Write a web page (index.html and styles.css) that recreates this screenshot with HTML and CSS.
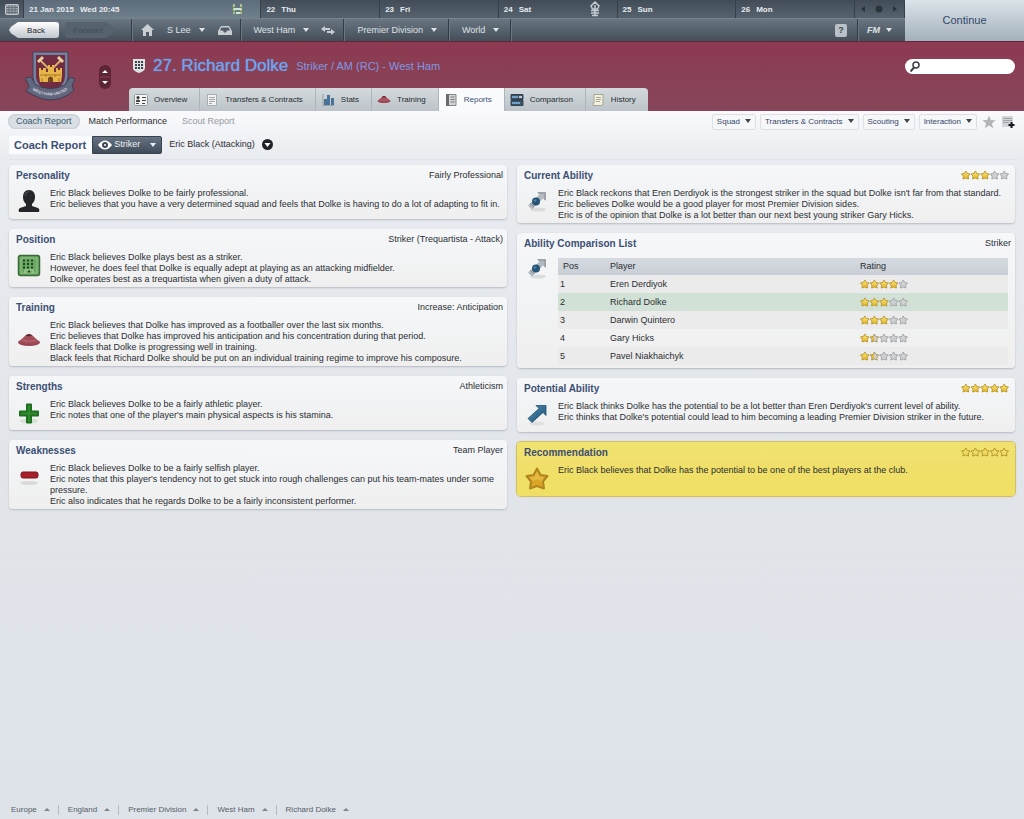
FILE: index.html
```
<!DOCTYPE html>
<html lang="en">
<head>
    <meta charset="UTF-8">
    <meta name="viewport" content="width=device-width, initial-scale=1.0">
    <title>Richard Dolke - Coach Report</title>
    <link rel="stylesheet" href="styles.css">
</head>
<body>
    <!-- shared icons -->
    <svg class="defs" width="0" height="0" aria-hidden="true">
        <defs>
            <linearGradient id="gold" x1="0" y1="0" x2="0" y2="1">
                <stop offset="0" stop-color="#f5e68a"/>
                <stop offset="1" stop-color="#e6b81c"/>
            </linearGradient>
            <linearGradient id="half">
                <stop offset="0.5" stop-color="#e6bf35"/>
                <stop offset="0.5" stop-color="#cfd0d2"/>
            </linearGradient>
            <linearGradient id="blue" x1="0" y1="0" x2="1" y2="1">
                <stop offset="0" stop-color="#4f93b8"/>
                <stop offset="1" stop-color="#1d4a6c"/>
            </linearGradient>
            <path id="star" d="M5 .8 6.500 3.400 9.500 3.900 7.500 6.200 7.900 9.200 5 8.100 2.100 9.200 2.500 6.200 .5 3.900 3.500 3.400Z" stroke-width="1" stroke-linejoin="round"/>
            <g id="star-full" fill="url(#gold)" stroke="#bd982e"><use href="#star"/></g>
            <g id="star-none" fill="#cfd0d2" stroke="#a3a5a8"><use href="#star"/></g>
            <g id="star-half" fill="url(#half)" stroke="#a8965c"><use href="#star"/></g>
            <g id="star-line" fill="#f0dc62" stroke="#b39428"><use href="#star"/></g>
            <symbol id="stars-5" viewBox="0 0 50 10">
                <use href="#star-full"/><use href="#star-full" x="10"/><use href="#star-full" x="20"/><use href="#star-full" x="30"/><use href="#star-full" x="40"/>
            </symbol>
            <symbol id="stars-4" viewBox="0 0 50 10">
                <use href="#star-full"/><use href="#star-full" x="10"/><use href="#star-full" x="20"/><use href="#star-full" x="30"/><use href="#star-none" x="40"/>
            </symbol>
            <symbol id="stars-3" viewBox="0 0 50 10">
                <use href="#star-full"/><use href="#star-full" x="10"/><use href="#star-full" x="20"/><use href="#star-none" x="30"/><use href="#star-none" x="40"/>
            </symbol>
            <symbol id="stars-1h" viewBox="0 0 50 10">
                <use href="#star-full"/><use href="#star-half" x="10"/><use href="#star-none" x="20"/><use href="#star-none" x="30"/><use href="#star-none" x="40"/>
            </symbol>
            <symbol id="stars-line" viewBox="0 0 50 10">
                <use href="#star-line"/><use href="#star-line" x="10"/><use href="#star-line" x="20"/><use href="#star-line" x="30"/><use href="#star-line" x="40"/>
            </symbol>
            <symbol id="telescope" viewBox="0 0 24 24">
                <ellipse cx="13" cy="20.500" rx="8" ry="2" fill="#dadcdd"/>
                <path d="M12 3h9v9l-3-2.500L7 20.500l-4-4L14.500 5.500Z" fill="#b3b9be"/>
                <path d="M13 4h7v7" fill="none" stroke="#868e95"/>
                <path d="m5 14 4 4" stroke="#868e95"/>
                <circle cx="11" cy="12.500" r="4" fill="#285478"/>
                <circle cx="10" cy="11.500" r="1.300" fill="#4a81a6"/>
            </symbol>
            <symbol id="cone" viewBox="0 0 24 14">
                <ellipse cx="12" cy="9.500" rx="11" ry="3.500" fill="#974550"/>
                <path d="M1 9Q5 6 8.500 2.500 12-.5 15.500 2.500 19 6 23 9 12 13 1 9Z" fill="#a34d58"/>
                <path d="M8.500 2.500Q12-.5 15.500 2.500 12 4 8.500 2.500Z" fill="#572b33"/>
                <path d="M5 7q7 3 14 0" fill="none" stroke="#bf6c74"/>
            </symbol>
        </defs>
    </svg>

    <header class="top">
        <div class="bars">
            <div class="calendar">
                <div class="day day-icon">
                    <svg width="14" height="11" viewBox="0 0 14 11"><rect x=".5" y=".5" width="13" height="10" rx="1" fill="#9da4aa" stroke="#c0c5c9"/><path d="M1 3.500h12M1 6h12M1 8.500h12M4 1v9M7 1v9M10 1v9" stroke="#66717b"/></svg>
                </div>
                <div class="day today"><span>21 Jan 2015</span><span>Wed 20:45</span>
                    <svg class="event" width="13" height="13" viewBox="0 0 13 13"><path d="M1 2h3v3h5V2h3v7H9v3H4V9H1Z" fill="#5e8774"/><path d="M3 1v10M10 1v10" stroke="#b7bd85" stroke-width="2" stroke-dasharray="3 1"/><path d="M3 6h7M5 10h4" stroke="#d3dfe0" stroke-width="2"/></svg>
                </div>
                <div class="day"><span>22</span><span>Thu</span></div>
                <div class="day"><span>23</span><span>Fri</span></div>
                <div class="day"><span>24</span><span>Sat</span>
                    <svg class="event" width="12" height="16" viewBox="0 0 12 16"><path d="M6 1 10 5 8.500 8h-5L2 5Z" fill="none" stroke="#c3cbd0" stroke-width="1.500"/><path d="M6 4v10M2 9.500h8M2 12h8M3 14.500h6" stroke="#c3cbd0" stroke-width="1.500"/></svg>
                </div>
                <div class="day"><span>25</span><span>Sun</span></div>
                <div class="day"><span>26</span><span>Mon</span></div>
                <div class="day pager">
                    <svg width="38" height="8" viewBox="0 0 38 8"><path d="M5 1v6L1 4ZM33 1v6l4-3Z" fill="#2b333b"/><circle cx="19" cy="4" r="3.500" fill="#2b333b"/></svg>
                </div>
            </div>
            <nav class="mainnav">
                <div class="history">
                    <button class="back">Back</button>
                    <button class="forward" disabled>Forward</button>
                </div>
                <div class="group manager">
                    <svg width="13" height="12" viewBox="0 0 13 12"><path d="M6.500 0 13 6h-2v6H8V8H5v4H2V6H0Z" fill="#c9ced3"/></svg>
                    <a href="#" class="caret">S Lee</a>
                    <svg width="14" height="9" viewBox="0 0 14 9"><path d="M3 0h8l3 5v4H0V5Z" fill="#c9ced3"/><path d="M2 4.500h3l1 2h2l1-2h3L10.500 1.500h-7Z" fill="#505c67"/></svg>
                </div>
                <div class="group">
                    <a href="#" class="caret">West Ham</a>
                    <svg width="14" height="9" viewBox="0 0 14 9"><path d="M4 0v2h5v2H4v2L0 3ZM10 3v2H6v2h4v2l4-3Z" fill="#c9ced3"/></svg>
                </div>
                <div class="group plain"><a href="#" class="caret">Premier Division</a></div>
                <div class="group plain"><a href="#" class="caret">World</a></div>
                <div class="group help"><button class="question" aria-label="Help">?</button></div>
                <div class="group fm"><a href="#" class="caret">FM</a></div>
            </nav>
        </div>
        <button class="continue">Continue</button>
    </header>

    <section class="banner">
        <div class="club">
            <svg class="crest" width="50" height="54" viewBox="0 0 50 54">
                <path d="M8 2h35v25q0 12-17.500 20Q8 39 8 27Z" fill="#74809f" stroke="#454155"/>
                <path d="M11 5h29v21q0 10-14.500 17Q11 36 11 26Z" fill="#722c42"/>
                <path d="m15 10 18 18M36 10 18 28" stroke="#d6ad67" stroke-width="2"/>
                <path d="m13 12 5-5M38 12l-5-5" stroke="#e6cfa2" stroke-width="3"/>
                <path d="M14 18h2v2h2v-2h3v4h2v-7h2v2h2v-2h2v7h2v-4h2v2h2v-2h2v7l-1 7H15l-1-7Z" fill="#e7b64a"/>
                <path d="M15 25h21M17 28v4M34 28v4M21 24v3M30 24v3" stroke="#ad7927"/>
                <path d="M23 32v-4q2.500-3 5 0v4Z" fill="#74461f"/>
                <path d="M0 28 6 27 11 35Q25 42 40 35L45 27 50 29 47 36 49 40 43 45Q26 55 8 45L1 41 4 36Z" fill="#626780" stroke="#3f3d50"/>
                <path id="ribbon" d="M3 37Q25 54 47 37" fill="none"/>
                <text class="motto"><textPath href="#ribbon" startOffset="50%" text-anchor="middle">WEST HAM UNITED</textPath></text>
            </svg>
            <svg width="12" height="24" viewBox="0 0 12 24"><rect width="12" height="24" rx="6" fill="#5c2435"/><path d="M1 12h10" stroke="#874054"/><path d="m6 5 3 3H3ZM6 19l3-3H3Z" fill="#fff"/></svg>
        </div>
        <div class="player">
            <div class="title-row">
                <svg width="12" height="14" viewBox="0 0 12 14"><path d="M0 0h12v9q0 3-6 5Q0 12 0 9Z" fill="#dfe2e5"/><path d="M2 3h8M2 6h8M2 9h8" stroke="#3d4248" stroke-width="2" stroke-dasharray="2 1"/></svg>
                <h1>27. Richard Dolke</h1>
                <p class="role">Striker / AM (RC) - West Ham</p>
                <label class="search">
                    <svg width="10" height="11" viewBox="0 0 10 11"><circle cx="6" cy="4" r="3" fill="none" stroke="#3b4044" stroke-width="1.500"/><path d="m4 6.500-3.500 4" stroke="#3b4044" stroke-width="2"/></svg>
                    <input type="text" aria-label="Search">
                </label>
            </div>
            <nav class="tabs">
                <a href="#"><svg width="14" height="12" viewBox="0 0 14 12"><rect x=".5" y=".5" width="13" height="11" rx="1" fill="#f4f5f5" stroke="#94999d"/><circle cx="4" cy="3.500" r="1.500" fill="#333"/><path d="M2 8V6.500q2-2 4 0V8ZM8 3h4v1H8ZM8 6h4v1H8ZM2 9h3v1H2ZM8 9h3v1H8Z" fill="#444"/></svg>Overview</a>
                <a href="#"><svg width="14" height="12" viewBox="0 0 14 12"><path d="M2.500.5h9v11h-9Z" fill="#f2f3f3" stroke="#a9adb0"/><path d="M4 3.500h6M4 5.500h6M4 7.500h6M4 9.500h3" stroke="#a0a5a9"/></svg>Transfers &amp; Contracts</a>
                <a href="#"><svg width="14" height="12" viewBox="0 0 12 12"><path d="M1 0v11.500h11" fill="none" stroke="#98a0a7"/><path d="M2 5h3v6H2ZM5 1h3v10H5ZM9 4h3v7H9Z" fill="#4a739a"/></svg>Stats</a>
                <a href="#"><svg width="14" height="9"><use href="#cone"/></svg>Training</a>
                <a href="#" class="active"><svg width="14" height="12" viewBox="0 0 12 12"><path d="M2 .5h9v11H2Z" fill="#d2d4d6" stroke="#84898d"/><path d="M2.500 0v12" stroke="#676c70" stroke-width="3"/><path d="M5.500 3h4M5.500 5.500h4M5.500 8h4" stroke="#777c81"/></svg>Reports</a>
                <a href="#"><svg width="14" height="12" viewBox="0 0 14 12"><path d="M1 .5h12v5H1ZM1 6.500h12v5H1Z" fill="#3e5365" stroke="#33414e"/><path d="M2 3h6M2 9h8" stroke="#6da2cc" stroke-width="2"/><path d="M9 3h3" stroke="#c3cbd2" stroke-width="2"/></svg>Comparison</a>
                <a href="#"><svg width="14" height="12" viewBox="0 0 12 12"><path d="M2 .5h9v9q0 2-2 2H1V9h1Z" fill="#f3f1e1" stroke="#a8a58f"/><path d="M4 3.500h5M4 5.500h5M4 7.500h4" stroke="#aaa78f"/></svg>History</a>
            </nav>
        </div>
    </section>

    <main>
        <div class="subnav">
            <a href="#" class="pill">Coach Report</a>
            <a href="#">Match Performance</a>
            <a href="#" class="muted">Scout Report</a>
            <div class="actions">
                <button class="caret">Squad</button>
                <button class="caret">Transfers &amp; Contracts</button>
                <button class="caret">Scouting</button>
                <button class="caret">Interaction</button>
                <svg width="14" height="14" viewBox="0 0 14 14"><path d="m7 .5 1.800 4.600 4.900.2-3.800 3.100 1.300 4.800L7 10.500l-4.200 2.700 1.300-4.800L.3 5.300l4.900-.2Z" fill="#b4b6b9"/></svg>
                <svg width="14" height="14" viewBox="0 0 14 14"><path d="M1 1h11v11H1Z" fill="#d3d5d8"/><path d="M2 3.500h9M2 5.500h9M2 7.500h6" stroke="#9da1a6"/><path d="M10.500 7v6M7.500 10h6" stroke="#16191c" stroke-width="2"/></svg>
            </div>
        </div>

        <div class="viewbar">
            <h2>Coach Report</h2>
            <button class="view caret">
                <svg width="14" height="10" viewBox="0 0 14 10"><path d="M0 5Q7-4 14 5 7 14 0 5Z" fill="#fff"/><circle cx="7" cy="5" r="3" fill="#3e4955"/><circle cx="7" cy="5" r="1" fill="#fff"/></svg>
                Striker
            </button>
            <span>Eric Black (Attacking)</span>
            <svg width="11" height="11" viewBox="0 0 11 11"><circle cx="5.500" cy="5.500" r="5.500" fill="#1f2327"/><path d="M2.500 4h6L5.500 8Z" fill="#fff"/></svg>
        </div>

        <div class="columns">
            <div class="column">
                <section class="panel">
                    <header><h3>Personality</h3><span>Fairly Professional</span></header>
                    <div class="body">
                        <svg width="24" height="24" viewBox="0 0 24 24"><path d="M12 1c4 0 6 3 6 7 0 3-1 5-3 7v2l6 2q2 1 1 4H2q-1-3 1-4l6-2v-2c-2-2-3-4-3-7 0-4 2-7 6-7Z" fill="#24262a"/><path d="M8 7q0-4 4-4.500" fill="none" stroke="#50545a"/></svg>
                        <p>Eric Black believes Dolke to be fairly professional.<br>Eric believes that you have a very determined squad and feels that Dolke is having to do a lot of adapting to fit in.</p>
                    </div>
                </section>
                <section class="panel">
                    <header><h3>Position</h3><span>Striker (Trequartista - Attack)</span></header>
                    <div class="body">
                        <svg width="24" height="24" viewBox="0 0 24 24"><rect x="1.500" y="2.500" width="21" height="20" rx="2" fill="#6aa862" stroke="#376a38" stroke-width="1.500"/><path d="M4 5h16v15H4Z" fill="none" stroke="#8fbd83"/><path d="M6 7.500h12M6 11h12M6 14.500h12" stroke="#1f4423" stroke-width="2" stroke-dasharray="2 2"/><path d="M8 20v-3h8v3" fill="none" stroke="#b4d3aa"/><path d="M11 18.500h2" stroke="#1f4423" stroke-width="2"/></svg>
                        <p>Eric Black believes Dolke plays best as a striker.<br>However, he does feel that Dolke is equally adept at playing as an attacking midfielder.<br>Dolke operates best as a trequartista when given a duty of attack.</p>
                    </div>
                </section>
                <section class="panel">
                    <header><h3>Training</h3><span>Increase: Anticipation</span></header>
                    <div class="body">
                        <svg class="mid" width="24" height="14"><use href="#cone"/></svg>
                        <p>Eric Black believes that Dolke has improved as a footballer over the last six months.<br>Eric believes that Dolke has improved his anticipation and his concentration during that period.<br>Black feels that Dolke is progressing well in training.<br>Black feels that Richard Dolke should be put on an individual training regime to improve his composure.</p>
                    </div>
                </section>
                <section class="panel">
                    <header><h3>Strengths</h3><span>Athleticism</span></header>
                    <div class="body">
                        <svg width="24" height="24" viewBox="0 0 24 24"><ellipse cx="12" cy="21" rx="9" ry="2.500" fill="#d3e2d1"/><path d="M10 4.500h4v7h7v4h-7v7h-4v-7H3v-4h7Z" fill="#2f8c2d" stroke="#1f7020" stroke-width="2" stroke-linejoin="round"/></svg>
                        <p>Eric Black believes Dolke to be a fairly athletic player.<br>Eric notes that one of the player's main physical aspects is his stamina.</p>
                    </div>
                </section>
                <section class="panel">
                    <header><h3>Weaknesses</h3><span>Team Player</span></header>
                    <div class="body">
                        <svg width="24" height="24" viewBox="0 0 24 24"><ellipse cx="12" cy="19" rx="9" ry="2" fill="#dadada"/><rect x="4" y="8" width="17" height="6" rx="2" fill="#a51f2a" stroke="#7c151e"/></svg>
                        <p>Eric Black believes Dolke to be a fairly selfish player.<br>Eric notes that this player's tendency not to get stuck into rough challenges can put his team-mates under some pressure.<br>Eric also indicates that he regards Dolke to be a fairly inconsistent performer.</p>
                    </div>
                </section>
            </div>

            <div class="column">
                <section class="panel">
                    <header><h3>Current Ability</h3><svg width="48" height="10"><use href="#stars-3"/></svg></header>
                    <div class="body">
                        <svg width="24" height="24"><use href="#telescope"/></svg>
                        <p>Eric Black reckons that Eren Derdiyok is the strongest striker in the squad but Dolke isn't far from that standard.<br>Eric believes Dolke would be a good player for most Premier Division sides.<br>Eric is of the opinion that Dolke is a lot better than our next best young striker Gary Hicks.</p>
                    </div>
                </section>
                <section class="panel comparison">
                    <header><h3>Ability Comparison List</h3><span>Striker</span></header>
                    <div class="body">
                        <svg width="24" height="24"><use href="#telescope"/></svg>
                        <table>
                            <thead>
                                <tr><th class="pos">Pos</th><th>Player</th><th class="rating">Rating</th></tr>
                            </thead>
                            <tbody>
                                <tr><td>1</td><td>Eren Derdiyok</td><td><svg width="48" height="10"><use href="#stars-4"/></svg></td></tr>
                                <tr class="current"><td>2</td><td>Richard Dolke</td><td><svg width="48" height="10"><use href="#stars-3"/></svg></td></tr>
                                <tr><td>3</td><td>Darwin Quintero</td><td><svg width="48" height="10"><use href="#stars-3"/></svg></td></tr>
                                <tr><td>4</td><td>Gary Hicks</td><td><svg width="48" height="10"><use href="#stars-1h"/></svg></td></tr>
                                <tr><td>5</td><td>Pavel Niakhaichyk</td><td><svg width="48" height="10"><use href="#stars-1h"/></svg></td></tr>
                            </tbody>
                        </table>
                    </div>
                </section>
                <section class="panel">
                    <header><h3>Potential Ability</h3><svg width="48" height="10"><use href="#stars-5"/></svg></header>
                    <div class="body">
                        <svg width="24" height="24" viewBox="0 0 24 24"><ellipse cx="12" cy="21.500" rx="8" ry="2" fill="#e0dedf"/><path d="M11 3.500h10v10l-3-3L7 20.500l-4-4 11-10Z" fill="url(#blue)" stroke="#24506f" stroke-width=".8"/></svg>
                        <p>Eric Black thinks Dolke has the potential to be a lot better than Eren Derdiyok's current level of ability.<br>Eric thinks that Dolke's potential could lead to him becoming a leading Premier Division striker in the future.</p>
                    </div>
                </section>
                <section class="panel highlight">
                    <header><h3>Recommendation</h3><svg width="48" height="10"><use href="#stars-line"/></svg></header>
                    <div class="body">
                        <svg width="24" height="24" viewBox="0 0 24 24"><path d="M12 2.500 15.500 9 22.500 10 18 15.500 19 22.500 12 20 5 22.500 6 15.500 1.500 10 8.500 9Z" fill="#d9a526" stroke="#b08522" stroke-width="2" stroke-linejoin="round"/><path d="M12 5.500 14.500 10.500 19.500 11.500 16 15q-4-3-8 0L4.500 11.500 9.500 10.500Z" fill="#e5b93f"/></svg>
                        <p>Eric Black believes that Dolke has the potential to be one of the best players at the club.</p>
                    </div>
                </section>
            </div>
        </div>
    </main>

    <footer class="crumbs">
        <a href="#">Europe</a>
        <a href="#">England</a>
        <a href="#">Premier Division</a>
        <a href="#">West Ham</a>
        <a href="#">Richard Dolke</a>
    </footer>
</body>
</html>
```
FILE: styles.css
```
:root {
    --claret: #8c3a51;
    --ink: #2b2e33;
    --heading: #3c4f74;
}

* {
    margin: 0;
    padding: 0;
    box-sizing: border-box;
}

body {
    display: flex;
    flex-direction: column;
    min-height: 100vh;
    font-family: "Liberation Sans", Arial, sans-serif;
    font-size: 9px;
    line-height: 11px;
    color: var(--ink);
    background: #dee3ea;
}

a {
    color: inherit;
    text-decoration: none;
}

button,
input {
    font: inherit;
    color: inherit;
    border: none;
    background: none;
}

button {
    cursor: pointer;
}

svg {
    display: block;
    flex-shrink: 0;
}

.defs {
    position: absolute;
}

.caret::after {
    content: "";
    display: inline-block;
    margin-left: 8px;
    border: 3px solid transparent;
    border-top: 4px solid currentColor;
    border-bottom: 0;
    vertical-align: 1px;
}

/* calendar and main navigation */
.top {
    display: flex;
    color: #e9ecef;
    border-bottom: 1px solid #5c2a3b;
}

.bars {
    flex: 1;
}

.calendar {
    display: grid;
    grid-template-columns: 24px 2fr repeat(5, 1fr) 50px;
    height: 18px;
    font-size: 8px;
    font-weight: bold;
    background: linear-gradient(#414c57, #56636f);
}

.day {
    display: flex;
    align-items: center;
    gap: 6px;
    padding: 0 5px;
    border-right: 1px solid #36404a;
}

.day.today {
    background: linear-gradient(#5d6c7a, #6f7f8c);
}

.event {
    margin-left: auto;
    margin-right: 11px;
}

.mainnav {
    display: flex;
    height: 23px;
    color: #dfe3e7;
    background: linear-gradient(#697681, #434e59);
    border-top: 1px solid #77838e;
}

.history {
    display: flex;
    align-items: center;
    gap: 6px;
    width: 131px;
    padding-left: 9px;
}

.back,
.forward {
    width: 50px;
    height: 16px;
    font-size: 8px;
}

.back {
    padding-left: 4px;
    color: #1f2429;
    background: linear-gradient(#fff, #bfc6cc);
    border-radius: 3px;
    clip-path: polygon(0 50%, 2px 30%, 9px 0, 100% 0, 100% 100%, 9px 100%, 2px 70%);
}

.forward {
    padding-right: 4px;
    color: #3f4a55;
    background: #56626d;
    border-radius: 3px;
    clip-path: polygon(100% 50%, 48px 30%, 41px 0, 0 0, 0 100%, 41px 100%, 48px 70%);
}

.group {
    display: flex;
    align-items: center;
    gap: 12px;
    padding: 0 8px 0 13px;
    border-left: 1px solid #333d47;
    box-shadow: inset 1px 0 #6b7782;
}

.group.manager {
    gap: 13px;
    padding-left: 9px;
}

.group.plain {
    padding: 0 11px 0 13px;
}

.group.help {
    flex: 1;
    justify-content: flex-end;
    padding-right: 10px;
}

.question {
    width: 12px;
    height: 13px;
    font-weight: bold;
    color: #3c4650;
    background: #b9c0c7;
    border-radius: 2px;
}

.group.fm {
    padding: 0 13px 0 9px;
    font-weight: bold;
    font-style: italic;
}

.fm .caret::after {
    margin-left: 6px;
}

.continue {
    width: 119px;
    font-size: 11px;
    color: #34486b;
    background: linear-gradient(#dbe3e9, #a3b0bb);
}

/* club banner */
.banner {
    display: flex;
    height: 69px;
    background: linear-gradient(var(--claret), #864659);
}

.club {
    display: flex;
    align-items: center;
    gap: 24px;
    width: 129px;
    padding-left: 25px;
}

.motto {
    font-size: 4px;
    font-weight: bold;
    fill: #d3d5de;
}

.player {
    flex: 1;
    display: flex;
    flex-direction: column;
    justify-content: space-between;
}

.title-row {
    display: flex;
    align-items: center;
    gap: 8px;
    padding: 14px 9px 0 4px;
}

h1 {
    font-size: 17px;
    line-height: 20px;
    font-weight: normal;
    color: #6fa3ee;
    text-shadow: 0 0 1px #6fa3ee;
}

.role {
    font-size: 11px;
    color: #7f98e0;
}

.search {
    display: flex;
    align-items: center;
    width: 110px;
    height: 15px;
    margin-left: auto;
    padding: 0 5px;
    background: #fff;
    border-radius: 8px;
}

.search input {
    width: 100%;
    outline: none;
}

.tabs {
    display: flex;
    align-self: flex-start;
    height: 23px;
    font-size: 8px;
    color: #262a2f;
    background: linear-gradient(#d4dadd, #bcc4c9);
    border-radius: 4px 4px 0 0;
    overflow: hidden;
}

.tabs a {
    display: flex;
    align-items: center;
    gap: 6px;
    padding: 0 12px 0 5px;
    border-right: 1px solid #adb5bb;
}

.tabs a:last-child {
    border-right: none;
}

.tabs .active {
    color: var(--heading);
    background: #fafbfc;
}

/* report */
main {
    flex: 1;
    padding: 0 9px;
    background: linear-gradient(#fafafd, #e8ebef 48px, #e1e5ea 400px, #dee3ea);
}

.subnav {
    display: flex;
    align-items: center;
    gap: 15px;
    height: 21px;
}

.subnav .pill {
    margin: 0 -6px 0 -1px;
    padding: 2px 8px;
    color: #34556a;
    background: #d9dfe4;
    border-radius: 8px;
    box-shadow: inset 0 0 2px #a4abb2;
}

.subnav .muted {
    color: #94989e;
}

.actions {
    display: flex;
    align-items: center;
    gap: 4px;
    margin-left: auto;
}

.actions button {
    height: 16px;
    padding: 0 4px;
    font-size: 8px;
    color: #34466a;
    background: #f6f7f9;
    border: 1px solid #dddfe4;
    border-radius: 2px;
}

.actions .caret::after {
    margin-left: 5px;
    color: #3f4349;
}

.actions svg {
    margin-left: 1px;
}

.viewbar {
    display: flex;
    align-items: center;
    gap: 7px;
    height: 28px;
    margin-bottom: 5px;
    padding-bottom: 2px;
    border-bottom: 1px solid #e0e3e8;
}

h2 {
    margin-right: -7px;
    padding: 0 6px 0 5px;
    font-size: 11px;
    line-height: 18px;
    color: var(--heading);
    background: #fafbfc;
}

.view {
    display: flex;
    align-items: center;
    height: 18px;
    padding: 0 5px;
    gap: 2px;
    color: #eef0f2;
    background: linear-gradient(#667283, #414c5a);
    border: 1px solid #38424e;
    border-radius: 0 2px 2px 0;
}

.columns {
    display: flex;
    gap: 10px;
}

.column {
    flex: 1;
    display: flex;
    flex-direction: column;
    gap: 10px;
}

.panel {
    min-height: 54px;
    padding: 5px 4px 2px 7px;
    background: linear-gradient(#f5f7f9, #efefef);
    border-radius: 4px;
    box-shadow: 0 1px 2px #b5bac1;
}

.panel header {
    display: flex;
    justify-content: space-between;
    height: 18px;
}

.panel header svg {
    margin-right: 2px;
}

h3 {
    font-size: 10px;
    line-height: 12px;
    color: var(--heading);
}

.body {
    display: flex;
    gap: 9px;
    padding-left: 1px;
}

.body svg {
    margin-top: 1px;
}

.body .mid {
    margin-top: 13px;
}

.body p {
    flex: 1;
}

.comparison {
    padding-bottom: 3px;
}

.comparison .body svg {
    margin-top: 0;
}

table {
    flex: 1;
    margin: 2px 3px 0 0;
    border-collapse: collapse;
    table-layout: fixed;
}

th {
    height: 17px;
    padding: 0 2px;
    font-weight: normal;
    text-align: left;
    background: linear-gradient(#d6dae0, #c9ced6);
}

.pos {
    width: 50px;
    padding-left: 5px;
}

.rating {
    width: 149px;
}

td {
    height: 18px;
    padding: 0 2px;
}

th.rating,
td:last-child {
    padding-left: 1px;
}

tbody tr:nth-child(odd) {
    background: #ebebeb;
}

tbody .current {
    background: #d2e1d6;
}

.highlight {
    background: linear-gradient(#f1e170, #efdf63);
    box-shadow: 0 0 1px 1px #cdbb60;
}

/* breadcrumb */
.crumbs {
    display: flex;
    padding: 4px 11px;
    font-size: 8px;
    line-height: 10px;
    color: #555c66;
}

.crumbs a {
    margin-right: 9px;
    padding-right: 8px;
    border-right: 1px solid #b6bbc2;
}

.crumbs a:last-child {
    border-right: none;
}

.crumbs a::after {
    content: "";
    display: inline-block;
    margin-left: 7px;
    border: 3px solid transparent;
    border-bottom: 3px solid #7d848d;
    border-top: 0;
    vertical-align: 1px;
}
```
